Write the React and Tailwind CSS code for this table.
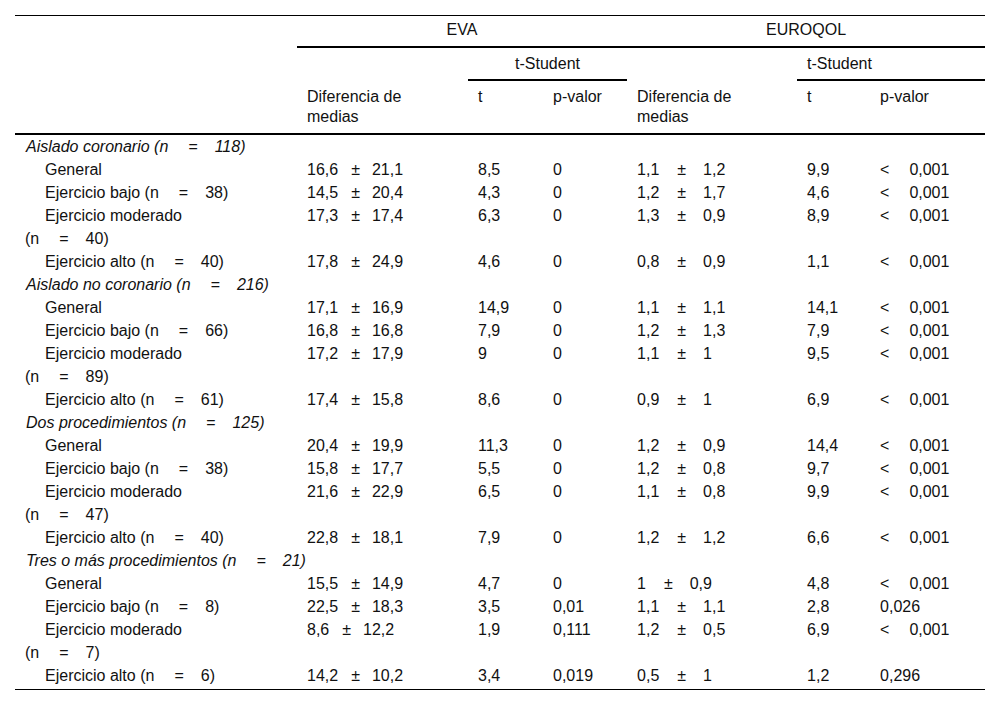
import React from 'react';

const groups = [
  {
    title: 'Aislado coronario', n: '118',
    rows: [
      ['General', null, ['16,6', '21,1'], '8,5', '0', ['1,1', '1,2'], '9,9', '< 0,001'],
      ['Ejercicio bajo', '38', ['14,5', '20,4'], '4,3', '0', ['1,2', '1,7'], '4,6', '< 0,001'],
      ['Ejercicio moderado', '40', ['17,3', '17,4'], '6,3', '0', ['1,3', '0,9'], '8,9', '< 0,001'],
      ['Ejercicio alto', '40', ['17,8', '24,9'], '4,6', '0', ['0,8', '0,9'], '1,1', '< 0,001'],
    ],
  },
  {
    title: 'Aislado no coronario', n: '216',
    rows: [
      ['General', null, ['17,1', '16,9'], '14,9', '0', ['1,1', '1,1'], '14,1', '< 0,001'],
      ['Ejercicio bajo', '66', ['16,8', '16,8'], '7,9', '0', ['1,2', '1,3'], '7,9', '< 0,001'],
      ['Ejercicio moderado', '89', ['17,2', '17,9'], '9', '0', ['1,1', '1'], '9,5', '< 0,001'],
      ['Ejercicio alto', '61', ['17,4', '15,8'], '8,6', '0', ['0,9', '1'], '6,9', '< 0,001'],
    ],
  },
  {
    title: 'Dos procedimientos', n: '125',
    rows: [
      ['General', null, ['20,4', '19,9'], '11,3', '0', ['1,2', '0,9'], '14,4', '< 0,001'],
      ['Ejercicio bajo', '38', ['15,8', '17,7'], '5,5', '0', ['1,2', '0,8'], '9,7', '< 0,001'],
      ['Ejercicio moderado', '47', ['21,6', '22,9'], '6,5', '0', ['1,1', '0,8'], '9,9', '< 0,001'],
      ['Ejercicio alto', '40', ['22,8', '18,1'], '7,9', '0', ['1,2', '1,2'], '6,6', '< 0,001'],
    ],
  },
  {
    title: 'Tres o más procedimientos', n: '21',
    rows: [
      ['General', null, ['15,5', '14,9'], '4,7', '0', ['1', '0,9'], '4,8', '< 0,001'],
      ['Ejercicio bajo', '8', ['22,5', '18,3'], '3,5', '0,01', ['1,1', '1,1'], '2,8', '0,026'],
      ['Ejercicio moderado', '7', ['8,6', '12,2'], '1,9', '0,111', ['1,2', '0,5'], '6,9', '< 0,001'],
      ['Ejercicio alto', '6', ['14,2', '10,2'], '3,4', '0,019', ['0,5', '1'], '1,2', '0,296'],
    ],
  },
];

function N({ n }) {
  return (
    <>
      (n<span className="ml-[20px] mr-[17px]">=</span>{n})
    </>
  );
}

function PM({ v, wide }) {
  return (
    <>
      {v[0]}
      <span className={wide ? 'ml-[18px] mr-[17px]' : 'ml-[13px] mr-[12px]'}>±</span>
      {v[1]}
    </>
  );
}

function P({ v }) {
  if (v.startsWith('< ')) {
    return (
      <>
        <span className="mr-[20px]">&lt;</span>{v.slice(2)}
      </>
    );
  }
  return v;
}

function Label({ name, n }) {
  if (!n) return <div className="indent-5">{name}</div>;
  if (name === 'Ejercicio moderado') {
    return (
      <div className="indent-5">
        {name}
        <br />
        <N n={n} />
      </div>
    );
  }
  return (
    <div className="indent-5">
      {name} <N n={n} />
    </div>
  );
}

export default function App() {
  const td = 'pl-[10px] align-top';
  const sub = 'font-normal pl-[10px] pt-[6px] pb-[6px] align-top border-b-2 border-black';
  return (
    <div className="bg-white w-[1000px] h-[707px] pt-[15px] text-[16px] text-[#111]" style={{ fontFamily: '"Liberation Sans", Arial, sans-serif' }}>
      <div className="mx-[15px] pb-[2px] border-t border-b border-black">
        <table className="table-fixed w-[970px] border-separate border-spacing-0">
          <colgroup>
            <col className="w-[282px]" />
            <col className="w-[171px]" />
            <col className="w-[75px]" />
            <col className="w-[84px]" />
            <col className="w-[170px]" />
            <col className="w-[73px]" />
            <col className="w-[115px]" />
          </colgroup>
          <thead className="leading-[20px]">
            <tr>
              <th></th>
              <th colSpan={3} className="font-normal text-center pt-[4px] pb-[6px] border-b-2 border-black">EVA</th>
              <th colSpan={3} className="font-normal text-center pt-[4px] pb-[6px] border-b-2 border-black">EUROQOL</th>
            </tr>
            <tr>
              <th></th>
              <th></th>
              <th colSpan={2} className="font-normal text-center pt-[6px] pb-[5px] border-b-2 border-black">t-Student</th>
              <th></th>
              <th colSpan={2} className="font-normal text-left pl-[10px] pt-[6px] pb-[5px] border-b-2 border-black">t-Student</th>
            </tr>
            <tr className="text-left">
              <th className="border-b-2 border-black"></th>
              <th className={sub}>Diferencia de<br />medias</th>
              <th className={sub}>t</th>
              <th className={sub}>p-valor</th>
              <th className={sub}>Diferencia de<br />medias</th>
              <th className={sub}>t</th>
              <th className={sub}>p-valor</th>
            </tr>
          </thead>
          <tbody className="leading-[23px]">
            {groups.map((g) => (
              <React.Fragment key={g.title}>
                <tr>
                  <td colSpan={7} className="pl-[11px] italic">
                    {g.title} <N n={g.n} />
                  </td>
                </tr>
                {g.rows.map((r, i) => (
                  <tr key={i}>
                    <td className={td}>
                      <Label name={r[0]} n={r[1]} />
                    </td>
                    <td className={td}><PM v={r[2]} /></td>
                    <td className={td}>{r[3]}</td>
                    <td className={td}>{r[4]}</td>
                    <td className={td}><PM v={r[5]} wide /></td>
                    <td className={td}>{r[6]}</td>
                    <td className={td}><P v={r[7]} /></td>
                  </tr>
                ))}
              </React.Fragment>
            ))}
          </tbody>
        </table>
      </div>
    </div>
  );
}
